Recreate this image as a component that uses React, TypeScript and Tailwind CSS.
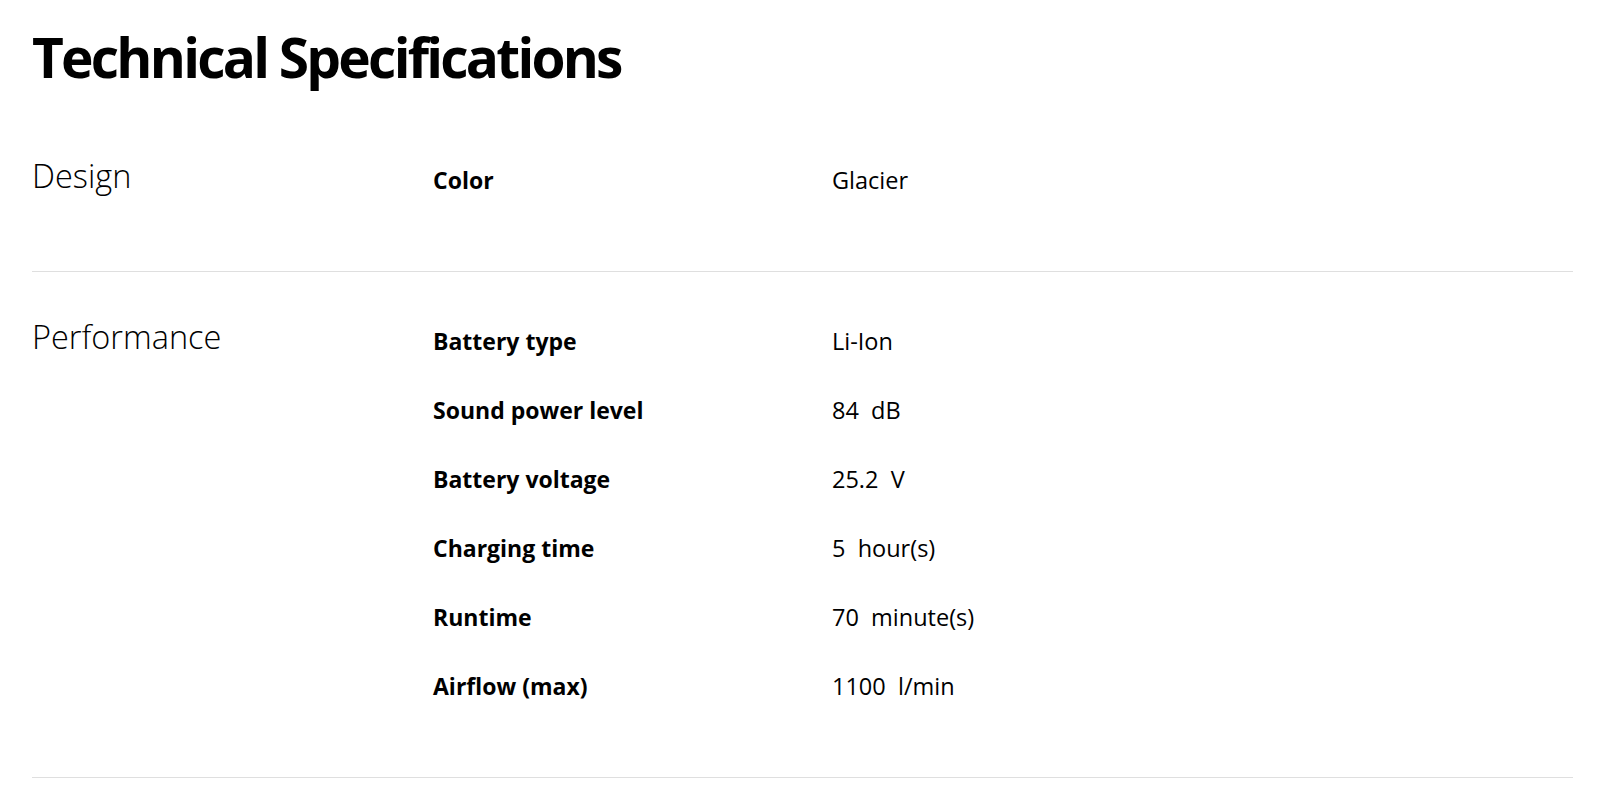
import React from 'react';

type Spec = { label: string; value: string; unit?: string };

const sections: { title: string; specs: Spec[] }[] = [
  {
    title: 'Design',
    specs: [{ label: 'Color', value: 'Glacier' }],
  },
  {
    title: 'Performance',
    specs: [
      { label: 'Battery type', value: 'Li-Ion' },
      { label: 'Sound power level', value: '84', unit: 'dB' },
      { label: 'Battery voltage', value: '25.2', unit: 'V' },
      { label: 'Charging time', value: '5', unit: 'hour(s)' },
      { label: 'Runtime', value: '70', unit: 'minute(s)' },
      { label: 'Airflow (max)', value: '1100', unit: 'l/min' },
    ],
  },
];

const SpecRow = ({ label, value, unit }: Spec) => (
  <div className="flex py-5 leading-[29px] text-black">
    <div className="w-[399px] shrink-0 text-[23px] font-bold">{label}</div>
    <div className="whitespace-pre text-[23.5px]">
      {value}
      {unit ? `  ${unit}` : ''}
    </div>
  </div>
);

const App = () => {
  return (
    <div
      className="min-h-screen bg-white pl-8 pr-[27px] pt-[23px] text-black"
      style={{ fontFamily: '"Open Sans", "Noto Sans", sans-serif' }}
    >
      <h1 className="mb-[20px] text-[55px] font-bold leading-[68px] tracking-[-2.75px]">
        Technical Specifications
      </h1>

      {sections.map((section) => (
        <section key={section.title} className="flex border-b border-[#dfdfdf] pt-[35px] pb-[56px]">
          <div className="mt-[10px] w-[401px] shrink-0 text-[32.5px] font-light leading-10">
            {section.title}
          </div>
          <div className="flex flex-col">
            {section.specs.map((spec) => (
              <SpecRow key={spec.label} {...spec} />
            ))}
          </div>
        </section>
      ))}
    </div>
  );
};

export default App;
